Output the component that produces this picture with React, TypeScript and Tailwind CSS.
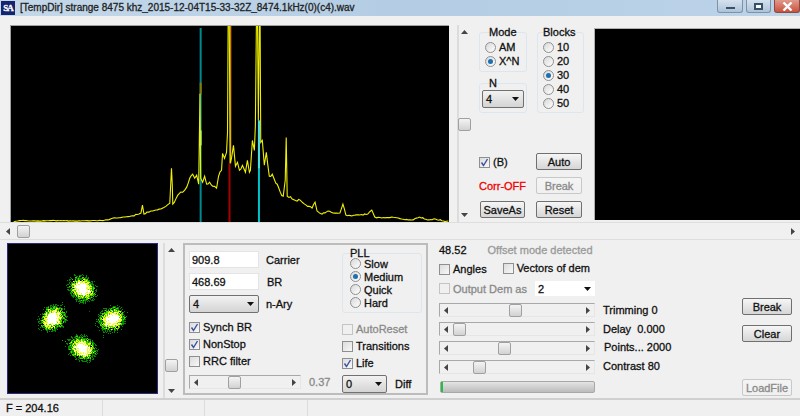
import { ReactNode } from "react";

const trace =
  "12,222 16,221 20,220.5 30,221 50,220.6 75,221 90,220.8 100,220.5 108,219.6 112,218 118,217.8 130,216 138,214 140,213 141.5,205 143,214 146,212 150,211 155,210 160,209 163,207.5 167,204.5 169,203 170,182 170.7,168 171.5,185 172,204 175,199 177,195 180,192 184,190 186,187 189,178 192,174 194,178 196,175 198,184 198.6,145 199.3,93 200,178 202,182 204,176 206,184 209,182 212,186 216,188 218,176 221,170 222,153 224,158 226,152 227,132 227.6,25 228.8,25 229.6,163 231,158 233,145 235,166 237,162 239,170 242,165 245,172 247,160 249,172 250,170 252,140 254,150 255,125 256,25 257.2,25 258,120 259,25 259.8,25 260.4,142 262,140 264,165 266,152 269,176 272,174 274,179 277,184 280,192 283,196 285,180 286,137 287,196 292,199 297,201 300,200 306,205 312,208 315,202 317,211 322,214 328,211 333,213 340,213 343,204 346,215 352,216 360,215 368,214 372,210 375,217 382,218 392,217 402,219 412,220 420,217 428,220 436,219 444,221 449,221";

function rng(seed: number) {
  let s = seed;
  return () => {
    s = (s * 16807) % 2147483647;
    return s / 2147483647;
  };
}

// adds small wiggle between the hand picked points, the real trace is noisy
function noisy(points: string) {
  const r = rng(77);
  const pts = points.split(" ").map((p) => p.split(",").map(Number));
  const out: string[] = [];
  pts.forEach((p, i) => {
    out.push(p.join(","));
    const n = pts[i + 1];
    if (!n || n[0] - p[0] < 2.5 || p[1] < 60 || n[1] < 60) return;
    const steps = Math.floor((n[0] - p[0]) / 1.5);
    for (let k = 1; k < steps; k++) {
      const x = p[0] + ((n[0] - p[0]) * k) / steps;
      const amp = x > 170 && x < 300 ? 3 : x > 130 ? 1.2 : 0.5;
      const y = p[1] + ((n[1] - p[1]) * k) / steps + (r() - 0.5) * amp;
      out.push(`${x.toFixed(1)},${Math.min(y, 222).toFixed(1)}`);
    }
  });
  return out.join(" ");
}

// constellation clusters, pixel by pixel
function cluster(cx: number, cy: number, seed: number, rx: number, ry: number, angle: number) {
  const r = rng(seed);
  const out: { x: number; y: number; c: string }[] = [];
  const ca = Math.cos(angle);
  const sa = Math.sin(angle);
  for (let y = -18; y <= 18; y++) {
    for (let x = -18; x <= 18; x++) {
      const u = (x * ca + y * sa) / rx;
      const v = (-x * sa + y * ca) / ry;
      const d = Math.sqrt(u * u + v * v) + (r() - 0.5) * 0.42;
      let c = "";
      if (d < 0.46) c = "#ffffff";
      else if (d < 0.64) c = "#f0ff20";
      else if (d < 0.78) c = "#50d400";
      else if (d < 1.02 && r() > 0.25) c = "#008a00";
      if (c) out.push({ x: cx + x, y: cy + y, c });
    }
  }
  return out;
}

const dots = [
  ...cluster(75, 45, 11, 15, 12, 0.75),
  ...cluster(45, 75, 23, 15, 12, -0.6),
  ...cluster(105, 76, 37, 15, 12, -0.4),
  ...cluster(75, 105, 51, 15, 12, 0.6),
  { x: 55, y: 59, c: "#008800" },
  { x: 53, y: 62, c: "#008800" },
  { x: 82, y: 68, c: "#006600" },
  { x: 96, y: 89, c: "#008800" },
  { x: 96, y: 92, c: "#008800" },
  { x: 96, y: 94, c: "#008800" },
  { x: 55, y: 97, c: "#22aa00" },
  { x: 58, y: 98, c: "#22aa00" },
  { x: 60, y: 100, c: "#008800" },
  { x: 89, y: 53, c: "#008800" },
  { x: 86, y: 52, c: "#008800" },
];

function Radio({ label, on, className = "" }: { label: string; on?: boolean; className?: string }) {
  return (
    <div className={`flex items-center gap-[3px] ${className}`}>
      <span className="flex h-[11px] w-[11px] shrink-0 items-center justify-center rounded-full border border-[#8e8f8f] bg-gradient-to-br from-[#d8d8d8] to-[#ffffff]">
        {on && <span className="h-[5px] w-[5px] rounded-full bg-[#1c6fb0]" />}
      </span>
      <span>{label}</span>
    </div>
  );
}

function Check({ label, on, off, className = "" }: { label: string; on?: boolean; off?: boolean; className?: string }) {
  return (
    <div className={`flex items-center gap-[3px] ${off ? "text-[#8a8a8a]" : ""} ${className}`}>
      <span className={`flex h-[11px] w-[11px] shrink-0 items-center justify-center border ${off ? "border-[#c4c4c4] bg-[#f0f0f0]" : "border-[#8e8f8f] bg-gradient-to-br from-[#dcdcdc] to-[#f8f8f8]"}`}>
        {on && (
          <svg width="9" height="9" viewBox="0 0 9 9">
            <path d="M1.5 4.5 L3.5 7.5 L7.5 1" fill="none" stroke="#3b4fa0" strokeWidth="1.4" />
          </svg>
        )}
      </span>
      <span className="whitespace-nowrap">{label}</span>
    </div>
  );
}

function Btn({ children, off, className = "" }: { children: ReactNode; off?: boolean; className?: string }) {
  return (
    <div
      className={`flex h-[17px] items-center justify-center rounded-[2px] border bg-gradient-to-b ${
        off ? "border-[#c8c8c8] from-[#f4f4f4] to-[#f0f0f0] text-[#8a8a8a]" : "border-[#707070] from-[#f6f6f6] to-[#d6d6d6]"
      } ${className}`}
    >
      {children}
    </div>
  );
}

function Drop({ value, className = "" }: { value: string; className?: string }) {
  return (
    <div className={`flex h-[18px] items-center justify-between rounded-[2px] border border-[#707070] bg-gradient-to-b from-[#f2f2f2] to-[#d4d4d4] pl-[3px] pr-[4px] ${className}`}>
      <span>{value}</span>
      <svg width="7" height="4" viewBox="0 0 7 4">
        <path d="M0 0 H7 L3.5 4 Z" fill="#111" />
      </svg>
    </div>
  );
}

function Arrow({ dir, className = "" }: { dir: "l" | "r" | "u" | "d"; className?: string }) {
  const p = { l: "M5 0 V7 L1 3.5 Z", r: "M2 0 V7 L6 3.5 Z", u: "M0 5 H7 L3.5 1 Z", d: "M0 2 H7 L3.5 6 Z" }[dir];
  return (
    <svg width="7" height="7" viewBox="0 0 7 7" className={`shrink-0 ${className}`}>
      <path d={p} fill="#444" />
    </svg>
  );
}

function Thumb({ className = "" }: { className?: string }) {
  return <div className={`h-[13px] w-[13px] rounded-[2px] border border-[#a0a0a0] bg-gradient-to-b from-[#f4f4f4] to-[#d2d2d2] ${className}`} />;
}

function HSlider({ thumb, className = "" }: { thumb: string; className?: string }) {
  return (
    <div className={`flex h-[14px] items-center border border-[#e6e6e6] border-l-[#a8a8a8] border-t-[#a8a8a8] px-[3px] ${className}`}>
      <Arrow dir="l" />
      <div className="flex-1">
        <Thumb className={thumb} />
      </div>
      <Arrow dir="r" />
    </div>
  );
}

function VScroll({ thumb, className = "" }: { thumb: string; className?: string }) {
  return (
    <div className={`flex w-[13px] flex-col items-center justify-between py-[4px] ${className}`}>
      <div className="flex w-full flex-col items-center">
        <Arrow dir="u" />
        <Thumb className={thumb} />
      </div>
      <Arrow dir="d" />
    </div>
  );
}

function Group({ title, children, className = "", titleClass = "ml-[9px]" }: { title: string; children: ReactNode; className?: string; titleClass?: string }) {
  return (
    <div className={`rounded-[3px] border border-[#dce6ef] ${className}`}>
      <div className={`-mt-[8px] h-[14px] leading-[14px] ${titleClass}`}>{title}</div>
      {children}
    </div>
  );
}

export default function App() {
  return (
    <div className="flex h-[416px] w-[800px] flex-col overflow-hidden bg-[#f0f0f0] font-['Liberation_Sans',sans-serif] text-[11px] leading-[14px] text-[#111] [-webkit-text-stroke:0.3px]">
      {/* title bar */}
      <div className="flex h-[16px] shrink-0 items-start bg-gradient-to-r from-[#c4d8ea] via-[#b4cde4] to-[#bcd3e8]">
        <div className="mx-[1px] mt-[1px] flex h-[14px] w-[14px] items-center justify-center bg-[#14246e] font-['Liberation_Serif',serif] text-[9px] font-bold leading-[14px] tracking-[-1px] text-white">
          SA
        </div>
        <div className="ml-[4px] text-[10px] leading-[15px] text-[#222]">
          [TempDir] strange 8475 khz_2015-12-04T15-33-32Z_8474.1kHz(0)(c4).wav
        </div>
        <div className="ml-auto flex gap-[3px]">
          <div className="flex h-[13px] w-[26px] items-end justify-center rounded-b-[3px] border border-t-0 border-[#7f93a8] bg-gradient-to-b from-[#d5e2ee] to-[#aec3d8] pb-[3px]">
            <div className="h-[2px] w-[9px] border border-[#39506a] bg-white" />
          </div>
          <div className="flex h-[13px] w-[25px] items-center justify-center rounded-b-[3px] border border-t-0 border-[#7f93a8] bg-gradient-to-b from-[#d5e2ee] to-[#aec3d8]">
            <div className="h-[7px] w-[9px] border-2 border-[#39506a] bg-white" />
          </div>
          <div className="flex h-[13px] w-[26px] items-center justify-center rounded-b-[3px] border border-t-0 border-[#8c4a3e] bg-gradient-to-b from-[#e09a8c] to-[#c8503c]">
            <svg width="11" height="9" viewBox="0 0 11 9">
              <path d="M1.5 0.5 L9.5 8.5 M9.5 0.5 L1.5 8.5" stroke="#fff" strokeWidth="2.4" />
            </svg>
          </div>
        </div>
      </div>

      {/* top part */}
      <div className="flex h-[206px] shrink-0 pl-[10px] pt-[9px]">
        <svg viewBox="10 25 439 197" className="h-[197px] w-[439px] shrink-0 border-t border-l border-[#a0a0a0] bg-black">
          <rect x="199" y="27" width="2" height="195" fill="#008a8e" />
          <rect x="199" y="82" width="2" height="12" fill="#8a7a00" />
          <rect x="199" y="130" width="2" height="15" fill="#9cf07a" />
          <rect x="228" y="163" width="2" height="59" fill="#a80000" />
          <rect x="229.4" y="25" width="1.4" height="138" fill="#d08000" />
          <rect x="257.6" y="120" width="2" height="102" fill="#00c4cc" />
          <rect x="257.6" y="120" width="2" height="48" fill="#48e0e0" />
          <polyline points={noisy(trace)} fill="none" stroke="#f0f000" strokeWidth="1.1" />
        </svg>
        <VScroll thumb="mt-[82px] w-[12px]" className="ml-[8px] h-[197px] border-l-2 border-[#dcdcdc]" />
        {/* controls */}
        <div className="ml-[9px] flex h-[197px] w-[105px] shrink-0 flex-col">
          <div className="mt-[7px] flex gap-[10px]">
            <div className="flex w-[48px] flex-col gap-[11px]">
              <Group title="Mode" className="h-[40px]">
                <Radio label="AM" className="ml-[5px] mt-[1px]" />
                <Radio label="X^N" on className="ml-[5px]" />
              </Group>
              <Group title="N" className="h-[30px]">
                <Drop value="4" className="mx-[2px] w-[42px]" />
              </Group>
            </div>
            <Group title="Blocks" titleClass="ml-[5px]" className="h-[81px] w-[47px]">
              <div className="ml-[5px] mt-[1px] flex h-[65px] flex-col justify-between">
                <Radio label="10" />
                <Radio label="20" />
                <Radio label="30" on />
                <Radio label="40" />
                <Radio label="50" />
              </div>
            </Group>
          </div>
          <div className="mt-[40px] grid grid-cols-[46px_46px] items-center gap-x-[11px] gap-y-[7px]">
            <Check label="(B)" on className="mt-[1px]" />
            <Btn>Auto</Btn>
            <div className="whitespace-nowrap text-[#f00000]">Corr-OFF</div>
            <Btn off>Break</Btn>
            <Btn className="ml-[1px]">SaveAs</Btn>
            <Btn>Reset</Btn>
          </div>
        </div>
        <div className="ml-[10px] mt-[3px] h-[192px] flex-1 border-t border-l border-[#b0b0b0] bg-black" />
      </div>

      {/* long scrollbar */}
      <div className="flex h-[18px] shrink-0 items-center border-y border-[#dedede] bg-[#f0f0f0] pl-[5px] pr-[4px]">
        <Arrow dir="l" />
        <div className="flex-1">
          <Thumb className="ml-[5px] w-[12px]" />
        </div>
        <Arrow dir="r" />
      </div>

      {/* bottom part */}
      <div className="flex h-[160px] shrink-0 border-b-2 border-[#d0d0d0] pl-[7px] pt-[3px]">
        <svg viewBox="0 0 151 151" shapeRendering="crispEdges" className="h-[151px] w-[151px] shrink-0 border border-[#2a2a80] bg-black">
          {dots.map((d, i) => (
            <rect key={i} x={d.x} y={d.y} width="1" height="1" fill={d.c} />
          ))}
        </svg>
        <VScroll thumb="mt-[105px] w-[12px]" className="ml-[5px] h-[155px] w-[15px] border-l-2 border-[#dcdcdc]" />

        {/* demod box */}
        <div className="ml-[5px] flex h-[152px] w-[245px] shrink-0 border-2 border-[#bcbcbc] pl-[4px] pt-[6px]">
          <div className="w-[153px] shrink-0">
            <div className="flex items-center">
              <div className="flex h-[17px] w-[70px] items-center border border-[#e4e4e4] bg-white pl-[2px]">909.8</div>
              <span className="ml-[7px]">Carrier</span>
            </div>
            <div className="mt-[5px] flex items-center">
              <div className="flex h-[17px] w-[70px] items-center border border-[#e4e4e4] bg-white pl-[2px]">468.69</div>
              <span className="ml-[8px]">BR</span>
            </div>
            <div className="mt-[5px] flex items-center">
              <Drop value="4" className="w-[70px]" />
              <span className="ml-[7px]">n-Ary</span>
            </div>
            <div className="mt-[7px] flex flex-col gap-[3px]">
              <Check label="Synch BR" on />
              <Check label="NonStop" on />
              <Check label="RRC filter" />
            </div>
            <div className="mt-[7px] flex items-center">
              <HSlider thumb="ml-[28px]" className="w-[112px]" />
              <span className="ml-[8px] text-[#8a8a8a]">0.37</span>
            </div>
          </div>
          <div className="w-[81px] shrink-0">
            <Group title="PLL" titleClass="ml-[7px]" className="mt-[2px] h-[60px] w-[80px]">
              <div className="ml-[7px] mt-[-3px] flex flex-col [&>div]:h-[13px]">
                <Radio label="Slow" />
                <Radio label="Medium" on />
                <Radio label="Quick" />
                <Radio label="Hard" />
              </div>
            </Group>
            <div className="mt-[9px] flex flex-col gap-[3px]">
              <Check label="AutoReset" off />
              <Check label="Transitions" />
              <Check label="Life" on />
            </div>
            <div className="mt-[5px] flex items-center">
              <Drop value="0" className="w-[45px]" />
              <span className="ml-[8px]">Diff</span>
            </div>
          </div>
        </div>

        {/* right column */}
        <div className="ml-[11px] w-[165px] shrink-0">
          <div className="flex">
            <span>48.52</span>
            <span className="ml-[21px] whitespace-nowrap text-[#9a9a9a]">Offset mode detected</span>
          </div>
          <div className="mt-[5px] flex items-center">
            <Check label="Angles" />
            <Check label="Vectors of dem" className="ml-[16px] -mt-[2px]" />
          </div>
          <div className="mt-[5px] flex items-center">
            <Check label="Output Dem as" off />
            <div className="ml-[8px] flex h-[15px] w-[60px] shrink-0 items-center justify-between bg-white pl-[3px] pr-[4px]">
              <span>2</span>
              <svg width="7" height="4" viewBox="0 0 7 4">
                <path d="M0 0 H7 L3.5 4 Z" fill="#111" />
              </svg>
            </div>
          </div>
          <div className="mt-[7px] flex flex-col gap-[5px]">
            <HSlider thumb="ml-[59px]" className="w-[156px]" />
            <HSlider thumb="ml-[3px]" className="w-[156px]" />
            <HSlider thumb="ml-[48px]" className="w-[156px]" />
            <HSlider thumb="ml-[23px]" className="w-[156px]" />
          </div>
          <div className="ml-[1px] mt-[7px] h-[12px] w-[155px] rounded-[2px] border border-[#a8a8a8] bg-gradient-to-b from-[#e4e4e4] to-[#bcbcbc]">
            <div className="h-full w-[2px] bg-[#20c040]" />
          </div>
        </div>

        {/* slider labels */}
        <div className="ml-[-1px] flex w-[120px] shrink-0 flex-col gap-[4.7px] pt-[60px] [&>div]:h-[14px]">
          <div className="whitespace-nowrap">Trimming 0</div>
          <div className="whitespace-pre">Delay  0.000</div>
          <div className="ml-[1px] whitespace-nowrap">Points... 2000</div>
          <div className="whitespace-nowrap">Contrast 80</div>
        </div>

        <div className="ml-[19px] flex w-[50px] shrink-0 flex-col pt-[55px]">
          <Btn>Break</Btn>
          <Btn className="mt-[10px]">Clear</Btn>
          <Btn off className="mt-[37px]">LoadFile</Btn>
        </div>
      </div>

      {/* status bar */}
      <div className="flex h-[16px] shrink-0 items-center">
        <div className="flex h-full w-[103px] items-center border-r border-[#dcdcdc] pl-[6px]">F = 204.16</div>
        <div className="h-full w-[102px] border-r border-[#dcdcdc]" />
        <div className="h-full w-[103px] border-r border-[#dcdcdc]" />
      </div>
    </div>
  );
}
